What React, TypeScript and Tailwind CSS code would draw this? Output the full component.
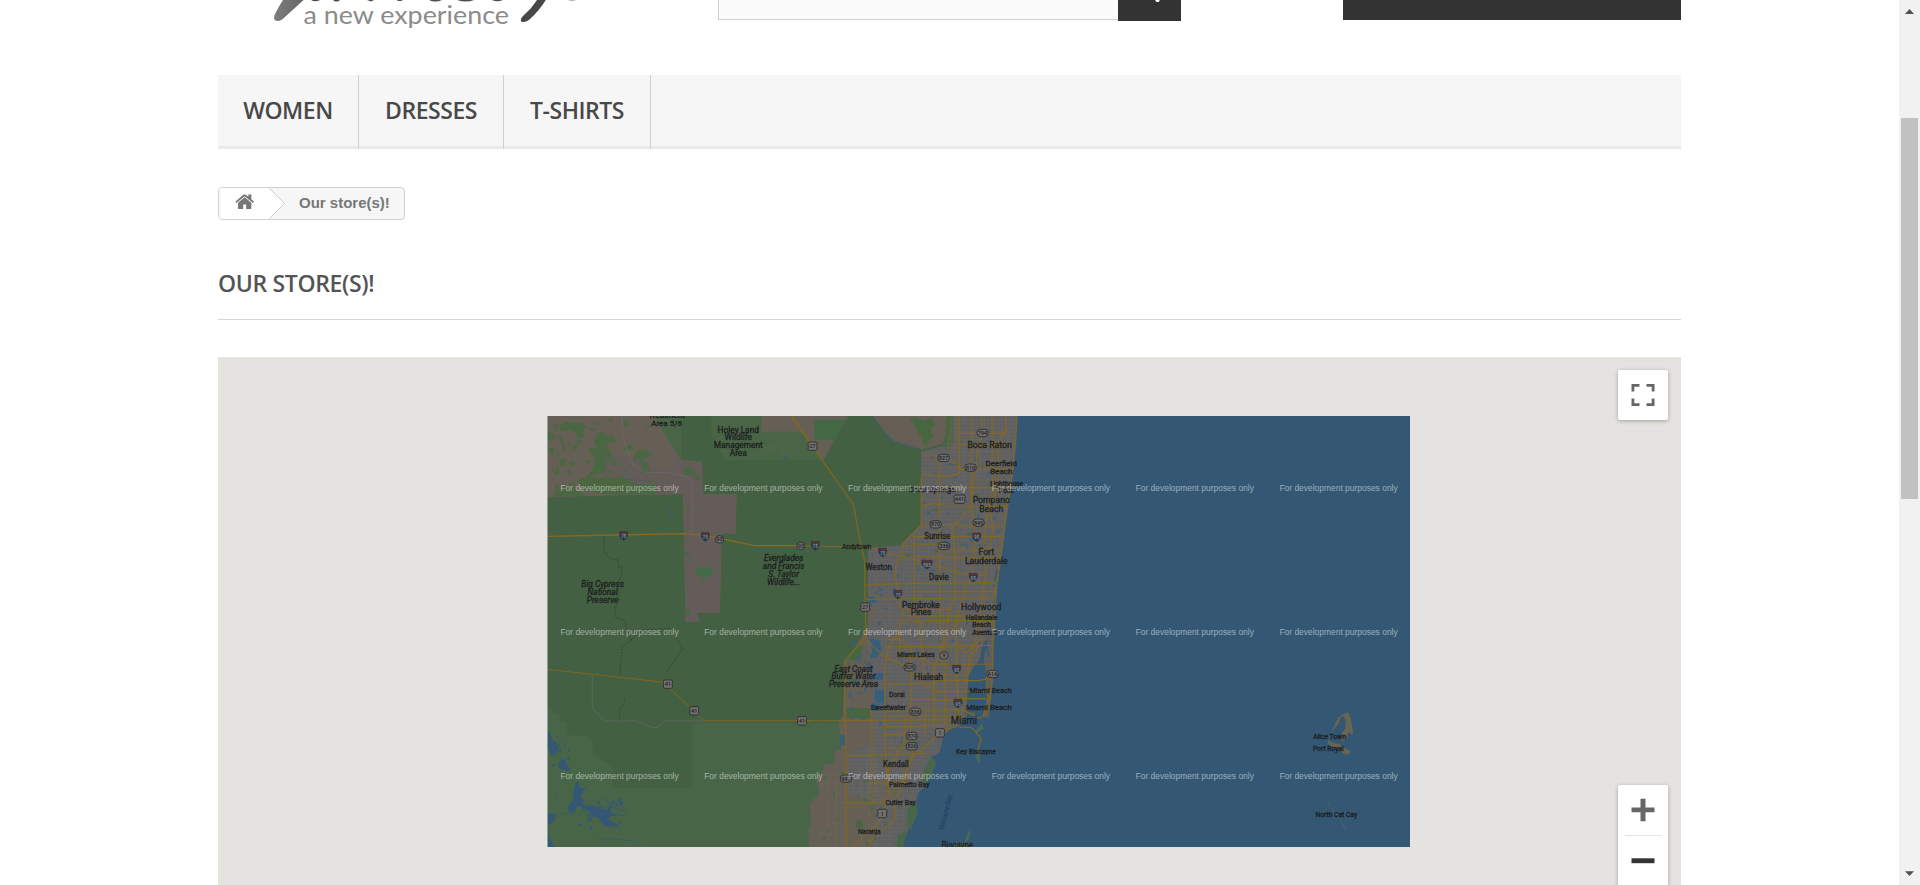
import React from "react";

type Label = {
  x: number;
  y: number;
  lines: string[];
  size?: number;
  lh?: number;
  italic?: boolean;
  w?: number;
  color?: string;
};

/* Small deterministic generator used for ponds and vegetation specks. */
function seeded(seed: number) {
  let s = seed;
  return () => {
    s = (s * 16807) % 2147483647;
    return s / 2147483647;
  };
}

function specks(seed: number, n: number, x: number, y: number, w: number, h: number, max: number) {
  const r = seeded(seed);
  let d = "";
  for (let i = 0; i < n; i++) {
    const px = x + r() * w;
    const py = y + r() * h;
    const a = 2 + r() * max;
    const b = 2 + r() * max;
    d += `M${px.toFixed(0)} ${py.toFixed(0)}l${a.toFixed(0)} ${(-b / 3).toFixed(0)} ${(a / 3).toFixed(0)} ${b.toFixed(0)} ${(-a).toFixed(0)} ${(b / 3).toFixed(0)}z`;
  }
  return d;
}

const westLabels: Label[] = [
  { x: 381, y: 24, lines: ["Treatment", "Area 5/6"], lh: 23, size: 24 },
  { x: 596, y: 68, lines: ["Holey Land", "Wildlife", "Management", "Area"], lh: 23.5, size: 25 },
  { x: 732, y: 453, lines: ["Everglades", "and Francis", "S. Taylor", "Wildlife..."], lh: 24, size: 25, italic: true },
  { x: 189, y: 531, lines: ["Big Cypress", "National", "Preserve"], lh: 23.5, size: 25, italic: true },
];

const eastLabels: Label[] = [
  { x: 570, y: 113, lines: ["Boca Raton"], size: 27, w: 133 },
  { x: 605, y: 168, lines: ["Deerfield", "Beach"], size: 24, lh: 24 },
  { x: 621, y: 228, lines: ["Lighthouse", "Point"], size: 20, lh: 20 },
  { x: 397, y: 245, lines: ["Coral Springs"], size: 24, w: 140 },
  { x: 575, y: 279, lines: ["Pompano", "Beach"], size: 26, lh: 26 },
  { x: 413, y: 388, lines: ["Sunrise"], size: 25, w: 78 },
  { x: 171, y: 417, lines: ["Andytown"], size: 21, w: 88 },
  { x: 560, y: 436, lines: ["Fort", "Lauderdale"], size: 26, lh: 26 },
  { x: 237, y: 479, lines: ["Weston"], size: 25, w: 79 },
  { x: 418, y: 511, lines: ["Davie"], size: 25, w: 59 },
  { x: 364, y: 593, lines: ["Pembroke", "Pines"], size: 25, lh: 23 },
  { x: 545, y: 601, lines: ["Hollywood"], size: 26, w: 121 },
  { x: 546, y: 630, lines: ["Hallandale", "Beach"], size: 20, lh: 20 },
  { x: 558, y: 674, lines: ["Aventura"], size: 21, w: 80 },
  { x: 349, y: 740, lines: ["Miami Lakes"], size: 22, w: 113 },
  { x: 162, y: 785, lines: ["East Coast", "Buffer Water", "Preserve Area"], size: 24.5, lh: 23, italic: true },
  { x: 387, y: 811, lines: ["Hialeah"], size: 26, w: 87 },
  { x: 292, y: 861, lines: ["Doral"], size: 22, w: 47 },
  { x: 573, y: 850, lines: ["Miami Beach"], size: 23, w: 127 },
  { x: 266, y: 901, lines: ["Sweetwater"], size: 21, w: 105 },
  { x: 568, y: 901, lines: ["Miami Beach"], size: 24, w: 137 },
  { x: 493, y: 941, lines: ["Miami"], size: 30, w: 79 },
  { x: 529, y: 1033, lines: ["Key Biscayne"], size: 21, w: 119 },
  { x: 289, y: 1071, lines: ["Kendall"], size: 25, w: 77 },
  { x: 329, y: 1131, lines: ["Palmetto Bay"], size: 21, w: 121 },
  { x: 303, y: 1186, lines: ["Cutler Bay"], size: 21, w: 91 },
  { x: 209, y: 1271, lines: ["Naranja"], size: 21, w: 68 },
  { x: 473, y: 1313, lines: ["Biscayne"], size: 25, w: 95 },
];

const islandLabels: Label[] = [
  { x: 210, y: 177, lines: ["Alice Town"], size: 20, w: 98 },
  { x: 206, y: 213, lines: ["Port Royal"], size: 20, w: 92 },
  { x: 230, y: 411, lines: ["North Cat Cay"], size: 20, w: 125 },
];

function Labels({ items }: { items: Label[] }) {
  return (
    <>
      {items.map((l, i) =>
        l.lines.map((t, j) => (
          <text
            key={`${i}-${j}`}
            x={l.x}
            y={l.y + j * (l.lh ?? 0)}
            fontSize={l.size}
            textAnchor="middle"
            fontStyle={l.italic ? "italic" : "normal"}
            textLength={l.w}
            lengthAdjust="spacingAndGlyphs"
            fill="#1c2021"
            stroke="#1c2021"
            strokeWidth="0.9"
          >
            {t}
          </text>
        )),
      )}
    </>
  );
}

type Shield = [number, number, string, "i" | "s" | "u"];

const westShields: Shield[] = [
  [252, 377, "75", "i"],
  [497, 380, "75", "i"],
  [540, 388, "93", "s"],
  [784, 408, "93", "s"],
  [827, 407, "75", "i"],
  [385, 823, "41", "u"],
  [464, 903, "41", "u"],
  [787, 933, "41", "u"],
];

const eastShields: Shield[] = [
  [39, 109, "27", "u"],
  [549, 69, "794", "s"],
  [432, 144, "827", "s"],
  [513, 173, "810", "s"],
  [480, 268, "441", "u"],
  [408, 343, "870", "s"],
  [537, 338, "845", "s"],
  [531, 381, "95", "i"],
  [433, 408, "336", "s"],
  [249, 427, "75", "i"],
  [382, 463, "595", "i"],
  [521, 502, "95", "i"],
  [295, 553, "75", "i"],
  [197, 592, "27", "u"],
  [433, 736, "9", "s"],
  [330, 772, "826", "s"],
  [471, 778, "95", "i"],
  [579, 792, "A1A", "s"],
  [475, 880, "95", "i"],
  [347, 905, "836", "s"],
  [337, 978, "874", "s"],
  [421, 969, "1", "u"],
  [337, 1009, "826", "s"],
  [139, 1106, "997", "s"],
  [248, 1211, "1", "u"],
];

function Shields({ items }: { items: Shield[] }) {
  return (
    <>
      {items.map(([x, y, t, kind], i) => {
        const wide = t.length > 2;
        if (kind === "i") {
          const w = wide ? 17 : 13;
          return (
            <g key={i} transform={`translate(${x} ${y})`}>
              <path
                d={`M${-w + 2} -13Q0 -10 ${w - 2} -13Q${w + 3} 5 0 14Q${-w - 3} 5 ${-w + 2} -13z`}
                fill="#27384f"
                stroke="#252d33"
                strokeWidth="1.5"
              />
              <path d={`M${-w + 1} -11Q0 -9 ${w - 1} -11V-6H${-w + 1}z`} fill="#6b302e" />
              <text y="7" fontSize="14" fontWeight="700" textAnchor="middle" fill="#858890">
                {t}
              </text>
            </g>
          );
        }
        const w = wide ? 17 : kind === "u" ? 14 : 12;
        return (
          <g key={i} transform={`translate(${x} ${y})`}>
            {kind === "s" ? (
              <rect x={-w} y="-11" width={w * 2} height="22" rx="10" fill="#707070" stroke="#242424" strokeWidth="2.4" />
            ) : (
              <path
                d={`M${-w + 3} -13H${w - 3}L${w} -8Q${w - 3} 0 ${w} 8L${w - 4} 12H${-w + 4}L${-w} 8Q${-w + 3} 0 ${-w} -8z`}
                fill="#707070"
                stroke="#242424"
                strokeWidth="2.4"
              />
            )}
            <text y="6" fontSize="16" fontWeight="500" textAnchor="middle" fill="#1c1c1c">
              {t}
            </text>
          </g>
        );
      })}
    </>
  );
}

const highways = [
  "M-24 19L0 52 43 115 162 285 175 360 195 455 197 600 200 680 134 755 136 900 140 1035 141 1312",
  "M-10 408L205 411 305 440 400 462 480 490 560 495",
  "M305 440L288 470 285 500 298 545 300 590 312 600 300 640 300 670 268 702 255 780 256 1000 262 1090 268 1150",
  "M200 690L255 740 300 760 345 795 405 845",
  "M516 18V300L528 380 520 470 490 560 470 640 472 780 475 880 478 930",
  "M548 18V70L530 150 515 290 460 350 466 460 465 560 448 610 440 660",
  "M578 18V160L580 240 560 330 550 430 560 480 548 560 540 640 520 720 500 790",
  "M652 18L648 100 636 210 622 280 608 400 600 470 588 520 586 600 580 700 578 800 570 870 560 910",
  "M618 18V70L590 100 600 170 590 240 570 290 580 350 570 420",
  "M480 18V190L440 200 372 192 365 205V345L310 400 305 440",
  "M418 150V200M418 195V400L420 480V660",
  "M440 150L470 160 480 178H640",
  "M480 70H610L625 60",
  "M480 104H640",
  "M420 233H636",
  "M370 290L395 280 450 288 620 290",
  "M365 345H460L600 350",
  "M345 378V600",
  "M345 380H605M310 408L400 402 418 408M418 420H600",
  "M345 440L560 445 600 440",
  "M197 525L345 520 588 518",
  "M197 568L345 566 590 564",
  "M345 545H590M320 598H450",
  "M310 618H588M300 645L330 628 365 640 380 632 590 632",
  "M330 600L365 640 365 700 372 730 372 800",
  "M256 688H300L330 710 580 706M256 710H440",
  "M300 670V740L372 745 400 765 580 762",
  "M333 710V990L340 1030 310 1110 268 1160 245 1178 141 1180",
  "M433 660V700L404 770V945M436 720V945",
  "M470 640L440 690 430 730 430 765",
  "M545 640L548 700 510 740 500 860V918",
  "M390 795H500M256 824L290 822H390L405 812 540 812 575 803",
  "M405 845H500M333 868H400L420 872 500 866 560 866",
  "M256 905L333 900 390 900 480 898 500 905 540 925 560 910",
  "M10 933L480 929",
  "M256 918H500M256 950H330L460 945",
  "M256 973H330M316 925V990L262 1090M376 905V980",
  "M217 900V1178",
  "M141 1032L155 1038 256 1033 380 1030",
  "M256 1014H345M480 948L440 958 400 985 376 1010 340 1040 330 1060 300 1150 285 1165 285 1225 270 1250 240 1260 215 1290 210 1312",
  "M160 1312L190 1280 240 1235 262 1170",
  "M217 1118H330M262 1090L268 1150M256 1060L270 1085",
  "M480 952H515L545 985 535 1020",
  "M560 800L565 870 550 920",
  "M500 845H560M470 700L500 730 540 690",
];

function StoreMap() {
  return (
    <svg
      viewBox="547.4 416 862.6 431"
      width="862.6"
      height="431"
      className="block"
      fontFamily="Roboto, 'Liberation Sans', sans-serif"
    >
      <defs>
        <pattern id="streets" width="22" height="24" patternUnits="userSpaceOnUse">
          <path d="M0 6H22M0 17H22M5 0V24M14 0V24" stroke="#6b6b6b" strokeWidth="1.2" fill="none" />
        </pattern>
        <pattern id="ruralstreets" width="25" height="30" patternUnits="userSpaceOnUse">
          <path d="M0 12H25M10 0V30" stroke="#706a63" strokeWidth="1" fill="none" />
        </pattern>
        <clipPath id="urbanclip">
          <path d="M365 125L440 105 455 18H652L640 200 612 400 600 480 592 560 585 660 545 700 535 760 510 790 500 830 498 900 480 945 450 955 430 980 418 1030 390 1050 395 1100 375 1130 355 1150 350 1180 345 1220 325 1260 315 1290 310 1312H215L230 1240 240 1180 145 1150 145 1030 218 1000 215 780 205 700 205 415 305 405 365 345z" />
        </clipPath>
      </defs>
      <rect x="547" y="416" width="864" height="432" fill="#446042" />

      {/* Everglades and Big Cypress */}
      <g transform="translate(540 410) scale(.333333)">
        <path d="M22 895L40 897V910L60 915V935L80 940V975L140 977 160 995V1035L180 1037V1050L200 1057 220 1080V1133H456V940H1000V1312H22z" fill="#486647" />
        <path d="M22 18H342L425 150 487 155 490 252H591L588 372H546L541 608H470L482 635H438L430 253 22 261z" fill="#665f55" />
        <path d="M175 138L300 140 335 172 405 177V155H487L490 252H591L588 372H546L541 608H470L482 635H438L430 253H320L280 210 190 200z" fill="#645c58" />
        <path d="M342 18H425V150z" fill="#4a6546" />
        <path d="M515 18H665V65H808L845 120V150H556L515 75z" fill="#4a6546" />
        <path d="M665 18H925L850 152 785 65H665z" fill="#665f55" />
        <path d="M825 30H919L886 90H825z" fill="#456844" />
        <path
          d="M170 70l20-5 8 12 22 0 12 18 -12 5 -15-4 -3 16 14 14 -2 20 -18-6 -5 18 12 20 -14 10 -22 4 -20 14 -8-5 15-16 10-24 4-20-14-10-10-18 18 3 12-5-10-16zM95 38l35 0 10 12-10 12 5 18-15 5-12-16-18-10zM60 45l28-8 10 12-15 12-22 2zM22 60l12 5-4 20-8 2zM30 115l14-2 0 22-14-4zM60 145l20 5-4 18-16-3zM120 205l120-2 55 20 60 0-10 30H190l-60-15-14-20zM40 245l50-12 30 10 20 14H45zM288 122l30-4 10 14-16 8 4 12-18-6-16 10 2-18zM300 152l26 6 0 18-20-8zM430 178l18-7 12 6 16 24 12 10-18-2-16-18-20 4z"
          fill="#45683f"
          opacity=".85"
        />
        <path d={specks(17, 75, 25, 25, 295, 220, 15)} fill="#47683f" opacity=".85" />
        <path d={specks(31, 12, 430, 270, 12, 350, 9)} fill="#476641" />
        <path d="M470 475l18-3 12 3 15-3 6 10-5 16-20 5-25-6-4-8zM484 510l8-1 6 15-8-2zM440 600l14 3-5 14-8-5z" fill="#436b45" />
        <path d="M255 208L318 212M385 285L400 330M440 430L458 455M730 143h12v4h-12z" stroke="#365d78" strokeWidth="2" fill="#365d78" />
        <path d="M248 18V70L265 130 282 165 315 187 385 188 440 200 458 212V372" fill="none" stroke="#747078" strokeWidth="1.5" />
        <path d="M600 114H728V150" fill="none" stroke="#5a6f5c" strokeWidth="1.5" />
        <path
          d="M194 380V425L210 445 235 450V470H246L245 500 235 520 238 570 225 595 228 620 255 632 262 658 275 690 248 712 240 795M275 690L310 660 390 655 430 715 380 788M255 865L256 880 243 890 238 933"
          fill="none"
          stroke="#293829"
          strokeWidth="1.8"
          strokeDasharray="5 4"
        />
        <path d="M158 795V895L195 933H290L335 952H356L372 933H492" fill="none" stroke="#686b68" strokeWidth="2" />
        <path d="M22 379L230 375 430 371 500 377 645 407H800" fill="none" stroke="#8a691e" strokeWidth="4" />
        <path d="M22 778L230 801 372 817 492 932H820" fill="none" stroke="#80651f" strokeWidth="3" />
        <path d="M755 18L820 108" stroke="#8a691e" strokeWidth="4" />
        <path
          d="M22 965l12 6 2 18 14 6 8 25-12 6 4 12-18-10-10-22zM62 1050l16-2 2 16 14 12-8 8-18-4-12-12zM108 1115l10 2 2 16 24 2-12 6-8 14 4 24 16 14-12 0-18-5-10 20-18-2 2-22 12-12 2-26zM132 1190l24-6 16 10 10-6 12 10 18-3 4 14 20 2-24 8-6 10 22 10 16 12-26-4-18 4-20-18-4-10-34-4 14-6zM22 1210l26 2 0 16-20 18-6-2zM22 1250l8 36 16 26H22z"
          fill="#345874"
        />
        <path
          d="M50 1213l44-4M200 1185l70 25M210 1215l50 2M170 1290l40-4 60 6 40 12M180 1165l45 18M50 1150v10M200 1245l45 14M22 962l8 4"
          fill="none"
          stroke="#345874"
          strokeWidth="2"
        />
        <path d={specks(8, 45, 115, 1165, 125, 85, 8)} fill="#345874" />
        <path d={specks(9, 20, 22, 970, 70, 110, 7)} fill="#345874" />
      </g>

      {/* Gold Coast */}
      <g transform="translate(800 410) scale(.333333)">
        <path d="M220 18H450L435 100 365 120 285 95 250 60z" fill="#665f55" />
        <path d="M330 30l15-8 30 12 20-10 12 20-15 12 10 22-15 14-5 16-14-8 2-18-14-12-8-22z" fill="#47683f" />
        <path d="M220 18L250 60 280 94 340 108 365 120M435 90l-4 20" fill="none" stroke="#365d78" strokeWidth="2.5" />
        <path d="M200 660L135 757 130 920 118 933 125 1020 105 1020V1062H72V1080L50 1110 60 1150 30 1182 35 1235 25 1260 30 1312H330V660z" fill="#665f55" />
        <path d="M365 125L440 105 455 18H652L640 200 612 400 600 480 592 560 585 660 585 1000 310 1312H215L230 1240 240 1180 145 1150 145 1030 218 1000 215 780 205 700 205 415 305 405 365 345z" fill="#5f5f60" />
        <path d="M455 18H480V130H450zM365 125H415V150H365zM205 540h25v100h-25zM140 780h75v110h-75zM220 1120h50v60h-50zM338 870h62v28h-62z" fill="#665f55" opacity=".8" />
        <path d="M440 18h22v80l-20 20-20-4 14-30z" fill="#48653f" opacity=".8" />
        <g clipPath="url(#urbanclip)">
          <rect x="200" y="18" width="460" height="1300" fill="url(#streets)" />
          <rect x="140" y="1020" width="100" height="300" fill="url(#streets)" />
          <path d={specks(51, 110, 210, 20, 420, 1280, 12)} fill="#4a6548" opacity=".8" />
          <path d={specks(77, 150, 205, 60, 400, 720, 8)} fill="#36607c" opacity=".8" />
        </g>
        <rect x="60" y="1080" width="160" height="232" fill="url(#ruralstreets)" />
        <path d="M210 685l30 5 5 25-15 30-10-5-5-30zM225 790l25 0v20h-25zM225 840h28v40h-14l-14-10zM216 880h20v22h-20zM122 975h14v30h-14zM205 560h20l8 20h-24z" fill="#345f7d" />
        <path d="M150 730l30-30 12 10-22 40h-30zM140 800l30 5v8h-30zM170 1235h20v18h-20zM140 895h70v30h-70z" fill="#47673f" />
        <path d={specks(29, 40, 145, 690, 105, 250, 13)} fill="#365f7b" opacity=".8" />
        <path d={specks(23, 40, 60, 1080, 240, 225, 10)} fill="#49663f" opacity=".8" />
        {/* Atlantic and Biscayne Bay */}
        <path
          d="M652 18L648 100 640 200 625 300 612 400 600 480 592 560 588 660 582 700 560 690 548 705 540 750 520 775 505 800 498 850 498 900 490 940 455 955 430 980 420 1030 395 1040 410 1060 392 1100 375 1130 355 1150 350 1180 345 1220 325 1260 315 1290 310 1314H1840V18z"
          fill="#345874"
        />
        <path d="M564 690H582L581 810 576 860 567 925 553 920 562 860 562 800 552 750z" fill="#5f5f59" />
        <path d="M548 940l4 16-20 14-6-6zM535 1012l8 24-4 24-12-18zM500 905l30 4-14 8zM512 1256l-4 30-12 15 2-20z" fill="#4b6955" />
        <path d="M395 1040l14 16-15 40-18 28-10-6 8-40zM350 1180l4 30-20 48-14-10 4-55zM320 1260l-10 54h-20l4-40zM470 1300l40 2-10 10h-30z" fill="#48674a" />
        <path d="M592 480l-6 35M588 560l-4 50M560 700l8 40" stroke="#345874" strokeWidth="5" />
        <g fill="none" stroke="#826820" strokeWidth="3.6" strokeLinejoin="round">
          {highways.map((d, i) => (
            <path key={i} d={d} />
          ))}
        </g>
        <text transform="translate(432 1260) rotate(-76)" fontSize="22" fill="#203f63" textLength="108">
          Biscayne Bay
        </text>
      </g>

      {/* Bimini islands */}
      <g transform="translate(1260 680) scale(.333333)">
        <path d="M250 103l10-5 8 2 4 12 6 28 2 20-6 4-5-10-6 12-12 20-8-10 4-18 10-12 2-26-8-12-8 4-4 16-16 18-4 10-2-3 10-22 8-18zM206 180l16 10 18 2 10 10 22 10 2 4-12 10-14-8-10-12-24-8-10-8z" fill="#686552" />
        <path d="M204 361l5 12 4 5M216 384l8 12 14 15M242 420l8 14 8 13" stroke="#626856" strokeWidth="2" fill="none" />
      </g>

      <g transform="translate(540 410) scale(.333333)">
        <Shields items={westShields} />
        <Labels items={westLabels} />
      </g>
      <g transform="translate(800 410) scale(.333333)">
        <Shields items={eastShields} />
        <Labels items={eastLabels} />
      </g>
      <g transform="translate(1260 680) scale(.333333)">
        <Labels items={islandLabels} />
      </g>

      {[490.9, 634.9, 778.6].map((y) =>
        [0, 1, 2, 3, 4, 5].map((c) => (
          <text
            key={`${y}-${c}`}
            x={560.8 + c * 143.8}
            y={y}
            fontSize="8.8"
            fontFamily="'Liberation Sans', Arial, sans-serif"
            fill="#ffffff"
            fillOpacity=".5"
            textLength="118.3"
            lengthAdjust="spacingAndGlyphs"
          >
            For development purposes only
          </text>
        )),
      )}
      <path d="M547.7 416V847" stroke="#a9b0a6" strokeWidth="1" />
    </svg>
  );
}

function Header() {
  return (
    <header className="flex h-[75px] items-start">
      <div className="h-[40px] w-[500px]">
        <svg width="500" height="40" viewBox="218 0 500 40" className="block">
          <defs>
            <linearGradient id="leftstroke" x1="0" x2="1">
              <stop offset="0" stopColor="#7c7d7d" />
              <stop offset="1" stopColor="#666767" />
            </linearGradient>
          </defs>
          <path d="M283 0H303.5Q296 7 282.5 19.2Q277.5 22.5 274.8 20Q273 18 275.5 13Q279 6 283 0z" fill="url(#leftstroke)" />
          <path d="M537 0H545.8Q539 11 529.5 19.5Q524 23.500 521.2 21.400Q519.800 18.800 524.500 14.500Q532 8 537 0z" fill="#484848" />
          <path d="M311 0h9q-5 2.400-9 0zM333 0h7l-2 1.500h-3zM367 0h7l-3 1.500zM397 0h6l-2 1h-3zM429 0h13q-7 3-13 0zM457 0h17q-8 3.200-17 0zM492 0h11q-6 2.400-11 0z" fill="#4e4e4e" />
          <path d="M567 0h10l-5 1z" fill="#aaa" />
          <text
            x="303.500"
            y="24"
            fontSize="25"
            fontFamily="Lato, 'Open Sans', sans-serif"
            fill="#8b8b8b"
            textLength="205.500"
            lengthAdjust="spacingAndGlyphs"
          >
            a new experience
          </text>
        </svg>
      </div>
      <div className="flex items-start">
        <div className="h-[20px] w-[400px] border-b border-l border-[#d0d0d0] bg-[#fbfbfb]" />
        <div className="h-[21px] w-[63px] bg-[#333]">
          <svg width="63" height="21" className="block">
            <path d="M37 0h4.500v1l-1 1h-2z" fill="#fff" />
          </svg>
        </div>
      </div>
      <div className="ml-auto h-[20px] w-[338px] bg-[#333]" />
    </header>
  );
}

function NavItem({ label, width }: { label: string; width: string }) {
  return (
    <li
      className={`${width} flex h-[74px] items-center justify-center border-r border-[#d0d0d0] pb-[4px] font-['Open_Sans',sans-serif] text-[23px] leading-[28px] font-semibold tracking-[-0.45px] text-[#484848]`}
    >
      {label}
    </li>
  );
}

export default function App() {
  return (
    <div className="flex h-[885px] w-full overflow-hidden bg-white">
      <div className="flex-1 overflow-hidden pl-[218px]">
        <div className="w-[1463px]">
          <Header />
          <nav className="h-[74px] bg-[#f6f6f6] shadow-[inset_0_-3px_0_#e9e9e9]">
            <ul className="flex">
              <NavItem label="WOMEN" width="w-[141px]" />
              <NavItem label="DRESSES" width="w-[145px]" />
              <NavItem label="T-SHIRTS" width="w-[147px]" />
            </ul>
          </nav>

          <div className="mt-[38px] flex h-[33px] w-[187px] overflow-hidden rounded-[4px] border border-[#d0d0d0] bg-[#f6f6f6]">
            <svg width="67" height="31" viewBox="0 0 67 31" className="block shrink-0">
              <path d="M0 0H50L65.500 15.500 50 31H0z" fill="#fff" />
              <path d="M50 0L65.500 15.500 50 31" fill="none" stroke="#d0d0d0" />
              <path d="M0 0H2V31H0z" fill="#f8f8f8" />
              <svg x="16.300" y="6.200" width="18.700" height="14.900" viewBox="89 256 1614 1280">
                <path
                  fill="#777"
                  d="M1472 992v480q0 26-19 45t-45 19h-384v-384h-256v384h-384q-26 0-45-19t-19-45v-480q0-1 .5-3t.5-3l575-474 575 474q1 2 1 6zm223-69l-62 74q-8 9-21 11h-3q-13 0-21-7l-692-577-692 577q-12 8-24 7-13-2-21-11l-62-74q-8-10-7-23.5t11-21.5l719-599q32-26 76-26t76 26l244 204v-195q0-14 9-23t23-9h192q14 0 23 9t9 23v408l219 182q10 8 11 21.5t-7 23.5z"
                />
              </svg>
            </svg>
            <span className="pl-[13px] font-['Liberation_Sans',Arial,sans-serif] text-[15px] leading-[29px] font-bold whitespace-nowrap text-[#777]">
              Our store(s)!
            </span>
          </div>

          <h1 className="mt-[49px] h-[51px] border-b border-[#d6d4d4] font-['Open_Sans',sans-serif] text-[23px] leading-[29px] font-semibold tracking-[-0.35px] text-[#555454]">
            OUR STORE(S)!
          </h1>

          <section className="relative mt-[37px] h-[528px] overflow-hidden bg-[#e5e3df] pt-[59px] pl-[329.4px]">
            <StoreMap />
            <button className="absolute top-[13px] right-[13px] flex h-[50px] w-[50px] items-center justify-center rounded-[2px] bg-white shadow-[0_1px_4px_rgba(0,0,0,0.3)]">
              <svg width="24" height="24" viewBox="0 0 24 24" fill="none" stroke="#666" strokeWidth="2.800">
                <path d="M1.900 8.500V2.400H8.500M15.500 2.400H22.100V8.500M22.100 15.500V21.600H15.500M8.500 21.600H1.900V15.500" />
              </svg>
            </button>
            <div className="absolute top-[428px] right-[13px] flex h-[101px] w-[50px] flex-col items-center rounded-[2px] bg-white shadow-[0_1px_4px_rgba(0,0,0,0.3)]">
              <div className="flex h-[50px] items-center">
                <svg width="24" height="24" viewBox="0 0 24 24">
                  <path d="M0.500 9.500H9.500V0.800H14.500V9.500H23.500V14.300H14.500V23.200H9.500V14.300H0.500z" fill="#666" />
                </svg>
              </div>
              <div className="h-px w-[37px] bg-[#e6e6e6]" />
              <div className="flex h-[50px] items-center">
                <svg width="24" height="24" viewBox="0 0 24 24">
                  <path d="M0.500 9.300H23.500V14.200H0.500z" fill="#333" />
                </svg>
              </div>
            </div>
          </section>
        </div>
      </div>

      <div className="flex h-[885px] w-[21px] flex-col items-center bg-[#f1f1f1]">
        <svg width="21" height="118" className="block shrink-0">
          <path d="M6 14L10.500 9 15 14z" fill="#505050" />
        </svg>
        <div className="h-[381px] w-[17px] shrink-0 bg-[#c1c1c1]" />
        <svg width="21" height="386" className="block shrink-0">
          <path d="M6 372.200H15L10.500 377z" fill="#505050" />
        </svg>
      </div>
    </div>
  );
}
